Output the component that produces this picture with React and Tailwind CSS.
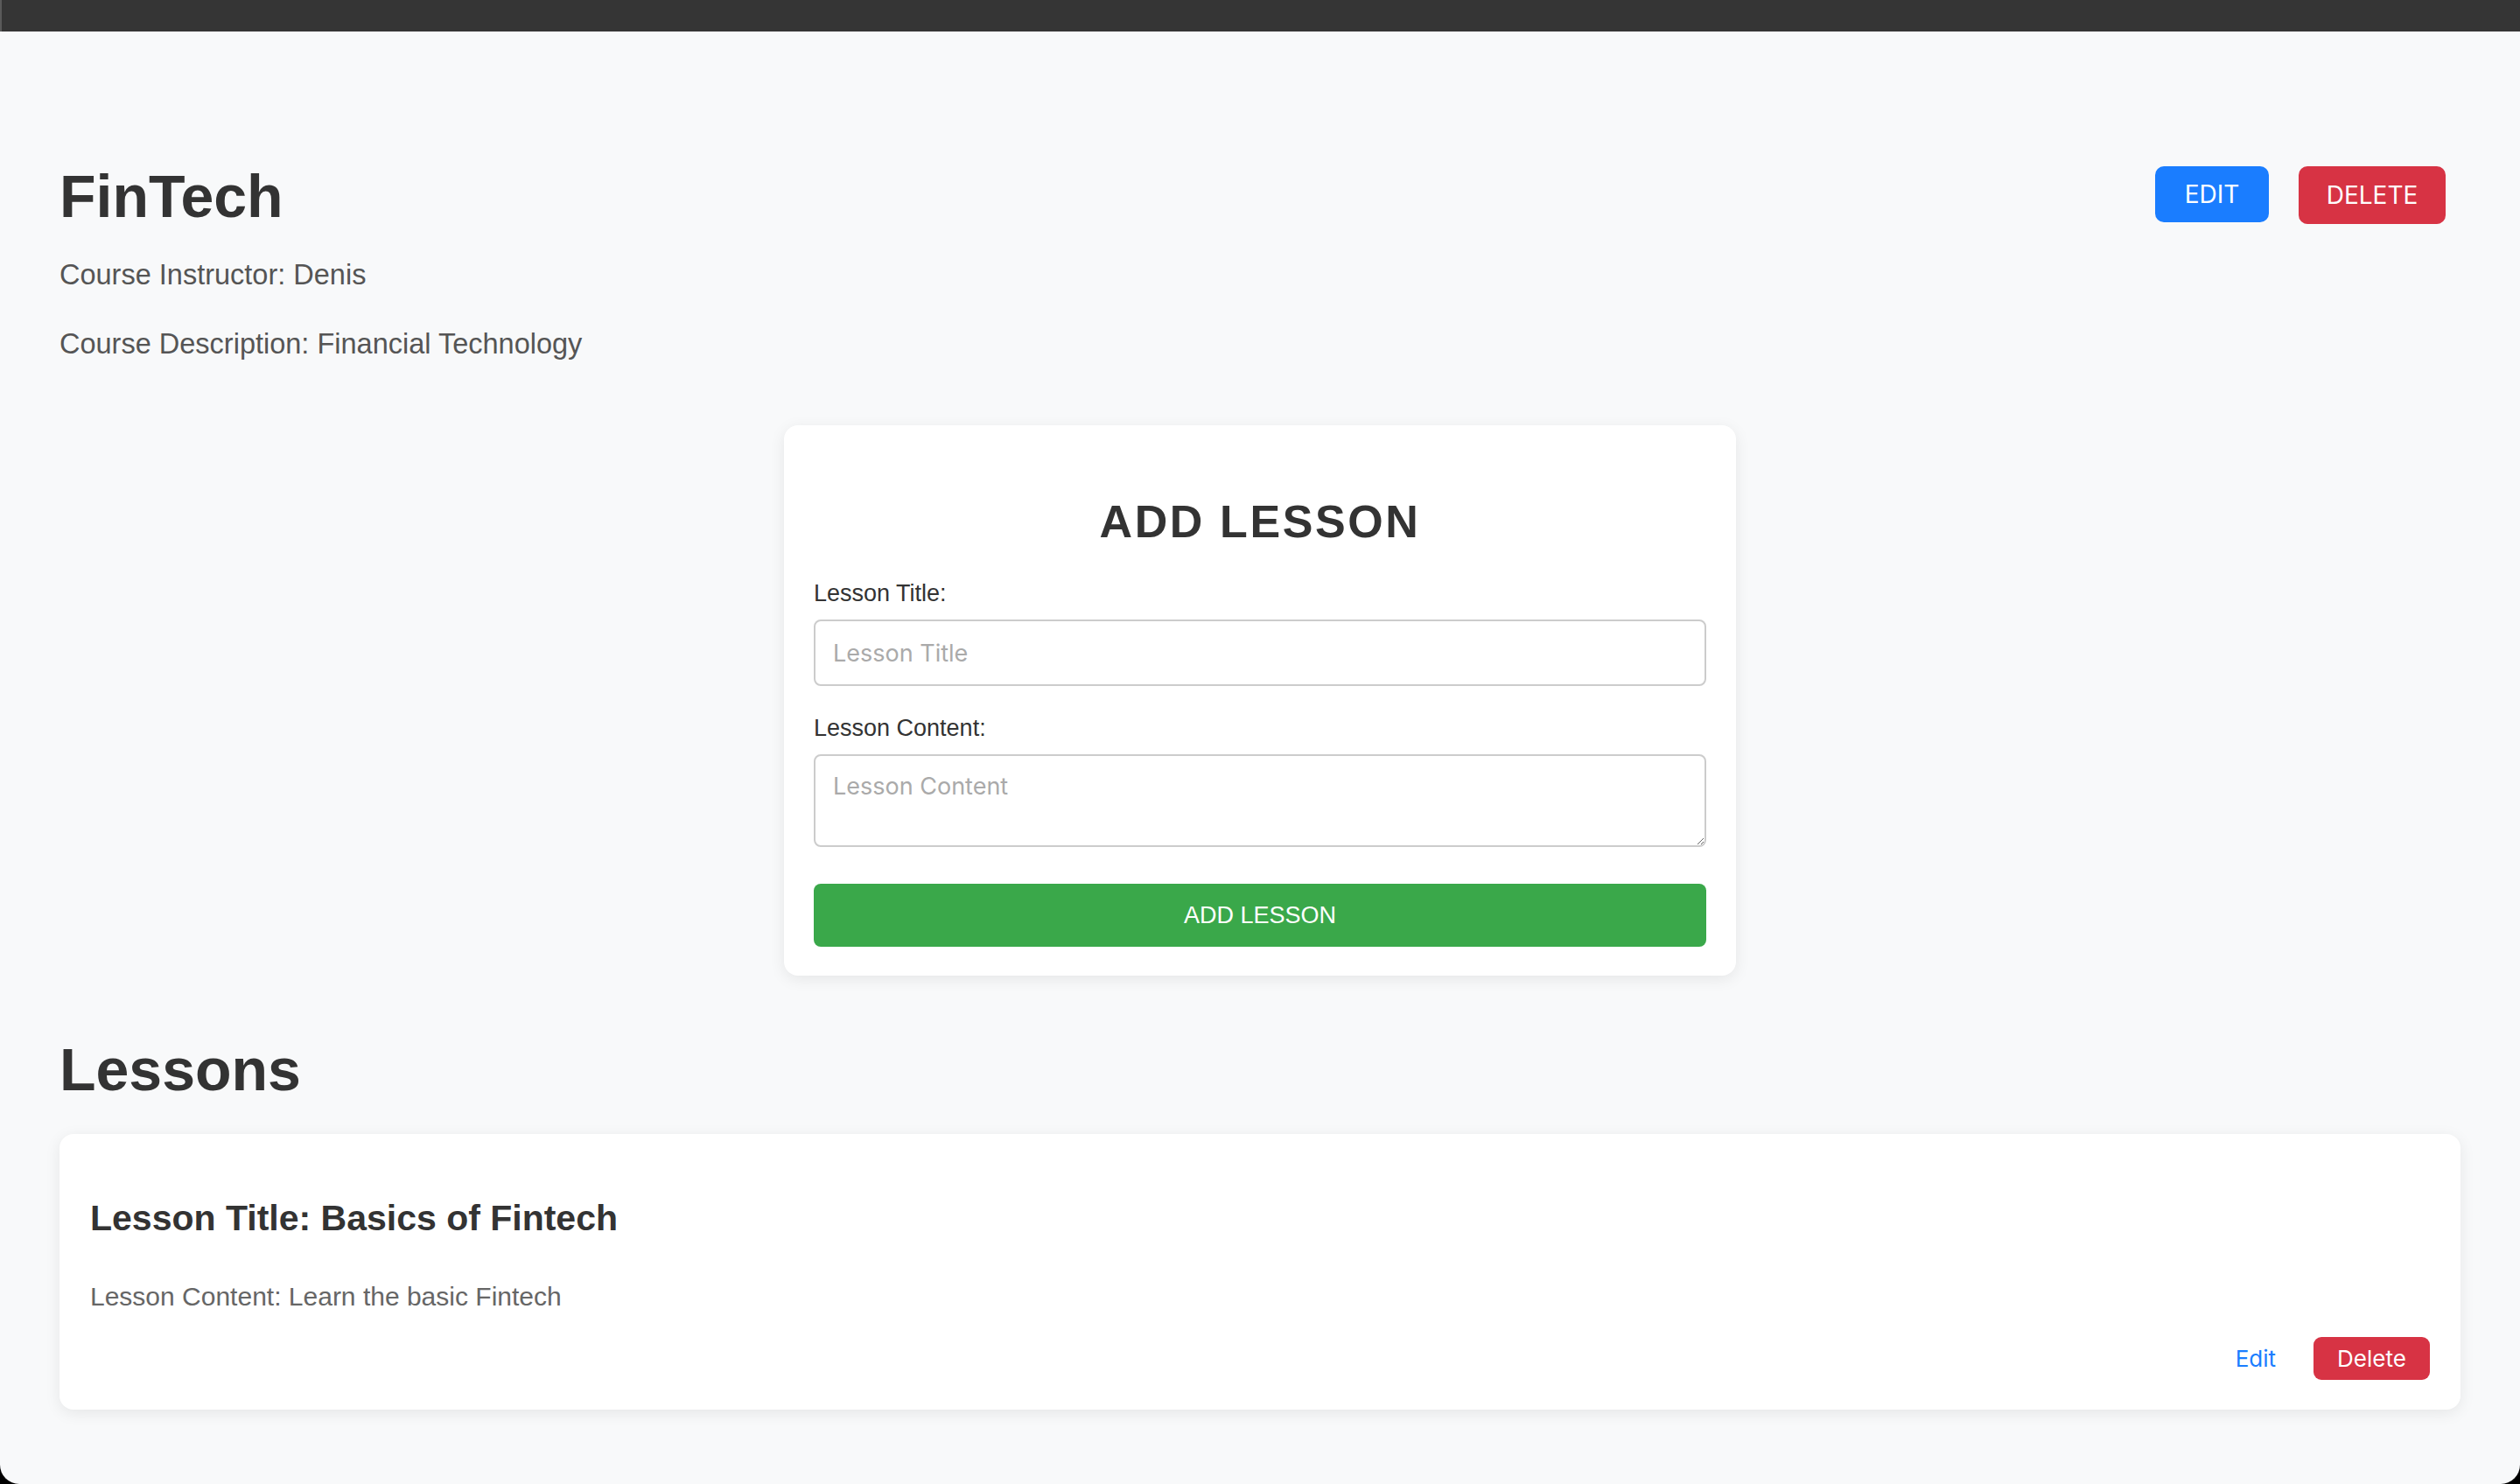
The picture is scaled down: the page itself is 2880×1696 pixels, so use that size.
import { useState } from 'react';

const sans = "font-['Liberation_Sans','Helvetica',Arial,sans-serif]";
const ui = "font-['Inter','Liberation_Sans',Arial,sans-serif]";

function LessonForm() {
  const [title, setTitle] = useState('');
  const [content, setContent] = useState('');

  return (
    <div className="mx-auto mt-[77px] w-[1088px] rounded-[16px] bg-white px-[34px] pb-[33px] pt-[84px] shadow-[0_4px_18px_rgba(0,0,0,0.08)]">
      <h2 className="text-center text-[52px] font-bold leading-none tracking-[2.6px] text-[#333]">ADD LESSON</h2>

      <label className="mt-[43px] block text-[27px] leading-none text-[#333]">Lesson Title:</label>
      <input
        value={title}
        onChange={(e) => setTitle(e.target.value)}
        placeholder="Lesson Title"
        className={`mt-[16px] block h-[76px] w-full rounded-[8px] border-2 border-[#ccc] bg-white px-[20px] text-[27px] text-[#333] outline-none placeholder:text-[#aaa] ${ui}`}
      />

      <label className="mt-[35px] block text-[27px] leading-none text-[#333]">Lesson Content:</label>
      <textarea
        value={content}
        onChange={(e) => setContent(e.target.value)}
        placeholder="Lesson Content"
        className={`mt-[16px] block h-[106px] w-full rounded-[8px] border-2 border-[#ccc] bg-white px-[20px] pt-[18px] text-[27px] leading-[34px] text-[#333] outline-none placeholder:text-[#aaa] ${ui}`}
      />

      <button
        type="button"
        className="mt-[42px] flex h-[72px] w-full items-center justify-center rounded-[8px] bg-[#3aa84a] text-[27px] text-white"
      >
        ADD LESSON
      </button>
    </div>
  );
}

function LessonCard({ lesson }) {
  return (
    <div className="mt-[40px] rounded-[16px] bg-white px-[35px] pb-[34px] pt-[76px] shadow-[0_4px_18px_rgba(0,0,0,0.08)]">
      <h3 className="text-[41px] font-bold leading-none text-[#333]">Lesson Title: {lesson.title}</h3>
      <p className="mt-[54px] text-[30px] leading-none text-[#666]">Lesson Content: {lesson.content}</p>
      <div className={`mt-[31px] flex items-center justify-end gap-[43px] ${ui}`}>
        <button type="button" className="text-[26px] text-[#1a7dff]">Edit</button>
        <button type="button" className="flex h-[49px] w-[133px] items-center justify-center rounded-[9px] bg-[#d73344] text-[26px] text-white">
          Delete
        </button>
      </div>
    </div>
  );
}

export default function App() {
  const lessons = [{ id: 1, title: 'Basics of Fintech', content: 'Learn the basic Fintech' }];

  return (
    <div className={`h-[1696px] w-full bg-black ${sans}`}>
      <div className="flex h-full flex-col overflow-hidden rounded-b-[22px] bg-[#f8f9fa]">
        {/* top bar */}
        <div className="h-[36px] shrink-0 border-l-2 border-[#5a5a5a] bg-[#353535]" />

        <main className="flex-1 px-[68px] pt-[154px]">
          {/* course header */}
          <div className="flex items-start justify-between">
            <div>
              <h1 className="text-[68px] font-bold leading-none text-[#333]">FinTech</h1>
              <p className="mt-[40px] text-[32.5px] leading-none text-[#555]">Course Instructor: Denis</p>
              <p className="mt-[46px] text-[32.5px] leading-none text-[#555]">Course Description: Financial Technology</p>
            </div>
            <div className={`mr-[17px] flex gap-[34px] ${ui}`}>
              <button type="button" className="flex h-[64px] w-[130px] items-center justify-center rounded-[10px] bg-[#1a7dff] text-[28px] text-white">
                EDIT
              </button>
              <button type="button" className="flex h-[66px] w-[168px] items-center justify-center rounded-[10px] bg-[#d73344] text-[28px] text-white">
                DELETE
              </button>
            </div>
          </div>

          <LessonForm />

          <h2 className="mt-[73px] text-[68px] font-bold leading-none text-[#333]">Lessons</h2>
          {lessons.map((l) => (
            <LessonCard key={l.id} lesson={l} />
          ))}
        </main>
      </div>
    </div>
  );
}
